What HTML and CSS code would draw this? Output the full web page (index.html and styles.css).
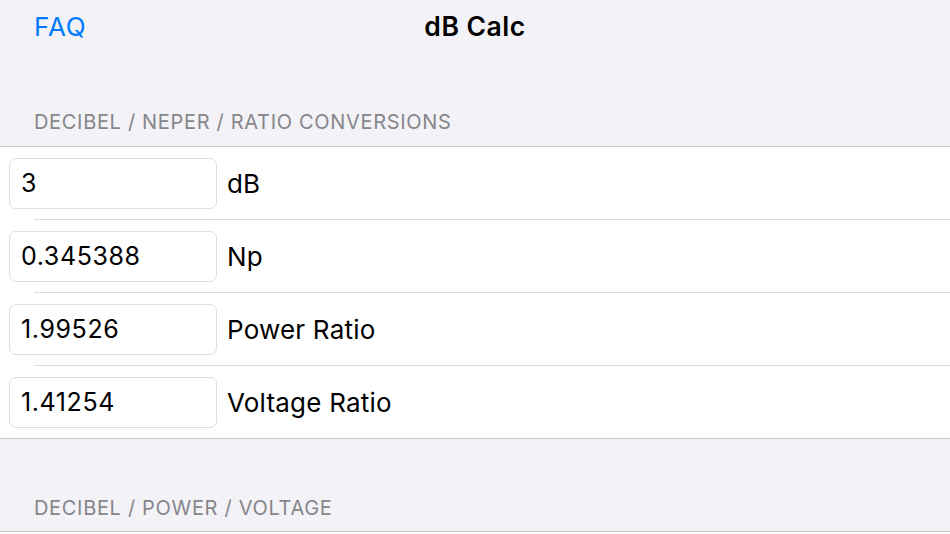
FILE: index.html
```html
<!DOCTYPE html>
<html>
<head>
<meta charset="utf-8">
<title>dB Calc</title>
<link rel="stylesheet" href="styles.css">
</head>
<body>
<div class="app">
  <header class="nav">
    <span class="nav-btn">FAQ</span>
    <span class="nav-title">dB Calc</span>
    <span class="nav-spacer"></span>
  </header>

  <div class="section-header first">DECIBEL / NEPER / RATIO CONVERSIONS</div>
  <div class="group">
    <div class="row">
      <input class="field" type="text" value="3">
      <span class="label">dB</span>
    </div>
    <div class="row">
      <input class="field" type="text" value="0.345388">
      <span class="label">Np</span>
    </div>
    <div class="row">
      <input class="field" type="text" value="1.99526">
      <span class="label">Power Ratio</span>
    </div>
    <div class="row">
      <input class="field" type="text" value="1.41254">
      <span class="label">Voltage Ratio</span>
    </div>
  </div>

  <div class="section-header second">DECIBEL / POWER / VOLTAGE</div>
  <div class="group tail"></div>
</div>
</body>
</html>
```

FILE: styles.css
```css
html, body {
  margin: 0;
  padding: 0;
  background: #f2f2f7;
  overflow: hidden;
}

.app {
  width: 950px;
  height: 534px;
  font-family: Inter, "Noto Sans", "Liberation Sans", sans-serif;
  color: #000;
  display: flex;
  flex-direction: column;
}

.nav {
  height: 52px;
  display: flex;
  align-items: center;
  padding: 0 34px;
}

.nav-btn {
  flex: 1;
  font-size: 26px;
  color: #007aff;
  letter-spacing: 0.9px;
}

.nav-title {
  font-size: 26.5px;
  font-weight: 600;
  letter-spacing: 0.5px;
}

.nav-spacer {
  flex: 1;
}

.section-header {
  display: flex;
  align-items: flex-end;
  padding: 0 34px 12px;
  font-size: 20px;
  line-height: 24px;
  color: #86868b;
  letter-spacing: 0.68px;
}

.section-header.first {
  height: 94px;
  box-sizing: border-box;
  padding-bottom: 12px;
}

.section-header.second {
  height: 92px;
  box-sizing: border-box;
  padding-bottom: 11px;
}

.group {
  background: #fff;
  border-top: 1px solid #c8c7cc;
  border-bottom: 1px solid #c8c7cc;
}

.group.tail {
  flex: 1;
  border-bottom: 0;
}

.row {
  height: 72px;
  display: flex;
  align-items: center;
  padding-left: 9px;
  position: relative;
}

.row + .row {
  border-top: 1px solid transparent;
}

.row + .row::before {
  content: "";
  position: absolute;
  top: -1px;
  left: 34px;
  right: 0;
  height: 1px;
  background: #dcdce0;
}

.field {
  box-sizing: border-box;
  width: 208px;
  height: 51px;
  margin: 0;
  padding: 0 11px;
  border: 1px solid #dedee2;
  border-radius: 7px;
  background: #fff;
  font-family: inherit;
  font-size: 25px;
  letter-spacing: 0.6px;
  color: #000;
  outline: none;
}

.label {
  margin-left: 10px;
  font-size: 26px;
  letter-spacing: 0.2px;
}
```
